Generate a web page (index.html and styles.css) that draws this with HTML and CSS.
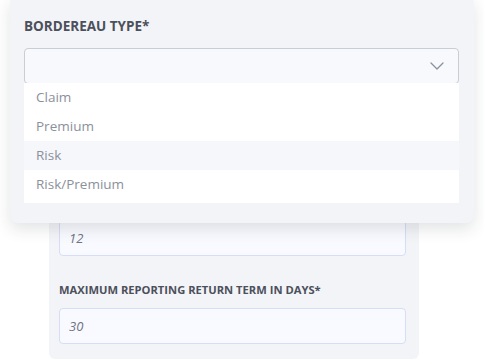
FILE: index.html
```html
<!DOCTYPE html>
<html lang="en">
<head>
    <meta charset="UTF-8">
    <meta name="viewport" content="width=device-width, initial-scale=1.0">
    <title>Bordereau settings</title>
    <link rel="stylesheet" href="styles.css">
</head>
<body>
    <div class="page">
        <div class="panel">
            <div class="field-input">12</div>
            <div class="field-label">MAXIMUM REPORTING RETURN TERM IN DAYS*</div>
            <div class="field-input">30</div>
        </div>

        <div class="popover">
            <div class="popover-label">BORDEREAU TYPE*</div>
            <div class="select">
                <svg class="chevron" width="14" height="8" viewBox="0 0 14 8">
                    <path d="M1 1 L7 7 L13 1" fill="none" stroke="#8a909c" stroke-width="1.3" stroke-linecap="round" stroke-linejoin="round"/>
                </svg>
            </div>
            <ul class="options">
                <li>Claim</li>
                <li>Premium</li>
                <li class="active">Risk</li>
                <li>Risk/Premium</li>
            </ul>
        </div>
    </div>
</body>
</html>
```

FILE: styles.css
```css
* {
    margin: 0;
    padding: 0;
    box-sizing: border-box;
}

body {
    background: #ffffff;
    font-family: 'Open Sans', 'Noto Sans', sans-serif;
    color: #4b505b;
}

.page {
    position: relative;
    width: 484px;
    height: 360px;
    overflow: hidden;
}

.panel {
    margin: 140px 0 0 49px;
    width: 370px;
    background: #f3f4f8;
    border-radius: 0 0 6px 6px;
    padding: 80px 13px 15px 10px;
    display: flex;
    flex-direction: column;
}

.field-input {
    height: 36px;
    border: 1px solid #d5ddf7;
    border-radius: 4px;
    background: #f9faff;
    padding: 0 9px;
    display: flex;
    align-items: center;
    font-size: 13px;
    font-style: italic;
    color: #6f7482;
}

.field-label {
    margin: 26px 0 11px;
    font-size: 11.2px;
    line-height: 15px;
    font-weight: 700;
    color: #4b505b;
}

.popover {
    position: absolute;
    top: -4px;
    left: 10px;
    width: 464px;
    height: 227px;
    background: #f3f4f8;
    border-radius: 8px;
    box-shadow: 0 6px 16px rgba(30, 35, 50, 0.13);
    padding: 21px 15px 0 14px;
}

.popover-label {
    font-size: 13.5px;
    line-height: 18px;
    font-weight: 700;
    color: #4b505b;
    margin-bottom: 13px;
}

.select {
    height: 36px;
    border: 1px solid #c9cdd6;
    border-radius: 4px;
    background: #f8f9fc;
    display: flex;
    align-items: center;
    justify-content: flex-end;
    padding-right: 14px;
}

.options {
    list-style: none;
    background: #ffffff;
    padding-bottom: 4px;
    margin-top: -1px;
}

.options li {
    height: 29px;
    line-height: 29px;
    padding-left: 12px;
    font-size: 13.5px;
    color: #8b909b;
}

.options li.active {
    background: #f6f7fb;
}
```
